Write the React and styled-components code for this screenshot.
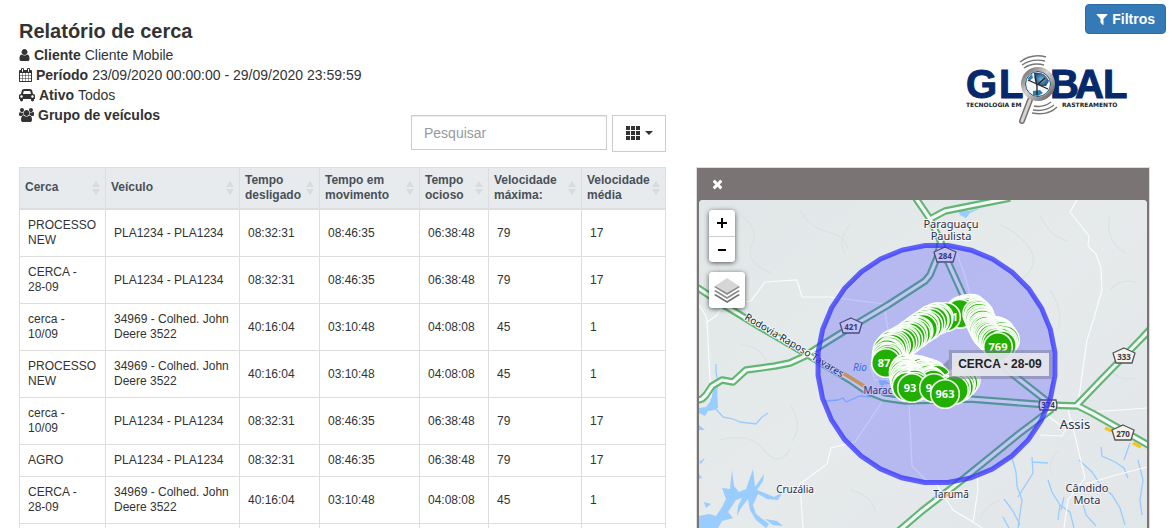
import { useState } from 'react';
import styled, { createGlobalStyle } from 'styled-components';

const GlobalStyle = createGlobalStyle`
    * {
        box-sizing: border-box;
    }

    body {
        margin: 0;
        background: #ffffff;
        color: #333333;
        font-family: 'Liberation Sans', Arial, sans-serif;
        font-size: 14px;
        line-height: 20px;
    }

    button, input {
        font-family: inherit;
    }
`;

const Page = styled.div`
    display: flex;
    flex-direction: column;
    gap: 15px;
    height: 100vh;
    overflow: hidden;
    padding: 0 23px 0 19px;
`;

const Columns = styled.div`
    display: grid;
    grid-template-columns: minmax(0, 647fr) minmax(0, 454fr);
    grid-template-rows: ${(props) => (props.$fill ? 'minmax(0, 1fr)' : 'auto')};
    gap: 30px;
    flex: ${(props) => (props.$fill ? '1' : 'none')};
    min-height: 0;
`;

const ReportHead = styled.header`
    display: flex;
    justify-content: space-between;
    align-items: flex-end;
    height: 152px;
`;

const ReportInfo = styled.div`
    align-self: flex-start;
    padding-top: 19px;
    white-space: nowrap;
`;

const Title = styled.h1`
    margin: 0 0 2px;
    font-size: 20px;
    line-height: 24px;
    font-weight: bold;
`;

const InfoLine = styled.p`
    display: flex;
    align-items: center;
    gap: 4px;
    margin: 0;
`;

const Icon = styled.svg`
    display: block;
    flex: none;
    fill: currentColor;
`;

const Toolbar = styled.div`
    display: flex;
    align-items: flex-start;
    gap: 5px;
    margin-left: -40px;
`;

const SearchInput = styled.input`
    width: 196px;
    height: 35px;
    padding: 6px 12px;
    border: 1px solid #cccccc;
    border-radius: 0;
    box-shadow: inset 0 1px 1px rgba(0, 0, 0, 0.08);
    font-size: 14px;
    color: #555555;
    outline: none;

    &::placeholder {
        color: #999999;
    }
`;

const ColumnsButton = styled.button`
    display: flex;
    align-items: center;
    justify-content: center;
    gap: 5px;
    width: 54px;
    height: 37px;
    padding: 0 0 2px;
    border: 1px solid #cccccc;
    background: #ffffff;
    color: #333333;
    cursor: pointer;
`;

const Brand = styled.div`
    display: flex;
    flex-direction: column;
    align-items: flex-end;
    gap: 19px;
    margin-right: -16px;
    padding-top: 4px;
`;

const FilterButton = styled.button`
    display: flex;
    align-items: center;
    gap: 4px;
    height: 30px;
    padding: 0 10px;
    border: 1px solid #2e6da4;
    border-radius: 4px;
    background: #337ab7;
    color: #ffffff;
    font-size: 14px;
    font-weight: bold;
    cursor: pointer;
`;

const Logo = styled.svg`
    display: block;
    width: 164px;
    height: 74px;
    margin-right: 37px;
`;

const Table = styled.table`
    width: 100%;
    table-layout: fixed;
    border-collapse: separate;
    border-spacing: 0;
    border: 1px solid #dddddd;
    border-width: 1px 0 0 1px;
    font-size: 12px;
    line-height: 15px;
`;

const HeadCell = styled.th`
    padding: 0 0 1px;
    border-right: 1px solid #dddddd;
    border-bottom: 2px solid #dddddd;
    background: #e7ebee;
`;

const SortButton = styled.button`
    display: flex;
    align-items: center;
    justify-content: space-between;
    width: 100%;
    height: 39px;
    padding: 0 5px;
    border: 0;
    background: transparent;
    color: #495057;
    font-size: 12px;
    font-weight: bold;
    line-height: 15px;
    text-align: left;
    cursor: pointer;
`;

const Cell = styled.td`
    height: 32px;
    padding: 8px;
    border-right: 1px solid #dddddd;
    border-bottom: 1px solid #dddddd;
    vertical-align: middle;
`;

const MapPanel = styled.section`
    display: flex;
    flex-direction: column;
    border: 1px solid #dddddd;
    border-bottom: 0;
    background: #7a7574;
    padding: 0 2px;
`;

const MapHeader = styled.div`
    display: flex;
    align-items: center;
    height: 32px;
    padding-left: 13px;
`;

const CloseButton = styled.button`
    padding: 0;
    border: 0;
    background: transparent;
    color: #ffffff;
    cursor: pointer;
`;

const MapArea = styled.div`
    position: relative;
    flex: 1;
    min-height: 0;
    overflow: hidden;
    border-radius: 4px 4px 0 0;
    background: #e2e8ea;
`;

const MapSvg = styled.svg`
    display: block;
    width: 100%;
    height: 100%;
    font-family: 'Noto Sans', sans-serif;
`;

const MapControls = styled.div`
    position: absolute;
    top: 10px;
    left: 10px;
    display: flex;
    flex-direction: column;
    align-items: flex-start;
    gap: 10px;
`;

const ControlBar = styled.div`
    overflow: hidden;
    border-radius: 4px;
    background: #ffffff;
    box-shadow: 0 1px 5px rgba(0, 0, 0, 0.65);
`;

const ControlButton = styled.button`
    display: flex;
    align-items: center;
    justify-content: center;
    width: ${(props) => props.$size}px;
    height: ${(props) => props.$size}px;
    padding: 0;
    border: 0;
    background: #ffffff;
    color: #000000;
    cursor: pointer;

    & + & {
        border-top: 1px solid #cccccc;
    }
`;

const USER =
    'M1536 1399q0 109-62.5 187t-150.5 78h-854q-88 0-150.5-78t-62.5-187q0-85 8.5-160.5t31.5-152 58.5-131 94-89 134.5-34.5q131 128 313 128t313-128q76 0 134.5 34.5t94 89 58.5 131 31.5 152 8.5 160.5zm-256-887q0 159-112.5 271.5t-271.5 112.5-271.5-112.5-112.5-271.5 112.5-271.5 271.5-112.5 271.5 112.5 112.5 271.5z';
const CALENDAR =
    'M192 1664h288v-288h-288v288zm352 0h320v-288h-320v288zm-352-352h288v-320h-288v320zm352 0h320v-320h-320v320zm-352-384h288v-288h-288v288zm736 736h320v-288h-320v288zm-384-736h320v-288h-320v288zm768 736h288v-288h-288v288zm-384-352h320v-320h-320v320zm-352-864v-288q0-13-9.5-22.5t-22.5-9.5h-64q-13 0-22.5 9.5t-9.5 22.5v288q0 13 9.5 22.5t22.5 9.5h64q13 0 22.5-9.5t9.5-22.5zm736 864h288v-320h-288v320zm-384-384h320v-288h-320v288zm384 0h288v-288h-288v288zm32-480v-288q0-13-9.5-22.5t-22.5-9.5h-64q-13 0-22.5 9.5t-9.5 22.5v288q0 13 9.5 22.5t22.5 9.5h64q13 0 22.5-9.5t9.5-22.5zm384-64v1280q0 52-38 90t-90 38h-1408q-52 0-90-38t-38-90v-1280q0-52 38-90t90-38h128v-96q0-66 47-113t113-47h64q66 0 113 47t47 113v96h384v-96q0-66 47-113t113-47h64q66 0 113 47t47 113v96h128q52 0 90 38t38 90z';
const CAR =
    'M480 1088q0-66-47-113t-113-47-113 47-47 113 47 113 113 47 113-47 47-113zm36-320h1016l-89-357q-2-8-14-17.5t-21-9.5h-768q-9 0-21 9.5t-14 17.5zm1372 320q0-66-47-113t-113-47-113 47-47 113 47 113 113 47 113-47 47-113zm160-96v384q0 14-9 23t-23 9h-96v128q0 80-56 136t-136 56-136-56-56-136v-128h-1024v128q0 80-56 136t-136 56-136-56-56-136v-128h-96q-14 0-23-9t-9-23v-384q0-93 65.5-158.5t158.5-65.5h28l105-419q23-94 104-157.5t179-63.5h768q98 0 179 63.5t104 157.5l105 419h28q93 0 158.5 65.5t65.5 158.5z';
const USERS =
    'M657 896q-162 5-265 128h-134q-82 0-138-40.5t-56-118.5q0-353 124-353 6 0 43.5 21t97.5 42.5 119 21.5q67 0 133-23-5 37-5 66 0 159 93 292zm1071 637q0 120-73 189.5t-194 69.5h-874q-121 0-194-69.5t-73-189.5q0-53 3.5-103.5t14-109 26.5-108.5 43-97.5 62-81 85.5-53.5 111.5-20q10 0 43 21.5t73 48 107 48 135 21.5 135-21.5 107-48 73-48 43-21.5q61 0 111.5 20t85.5 53.5 62 81 43 97.5 26.5 108.5 14 109 3.5 103.5zm-1024-1277q0 106-75 181t-181 75-181-75-75-181 75-181 181-75 181 75 75 181zm704 384q0 159-112.5 271.5t-271.5 112.5-271.5-112.5-112.5-271.5 112.5-271.5 271.5-112.5 271.5 112.5 112.5 271.5zm576 225q0 78-56 118.5t-138 40.5h-134q-103-123-265-128 93-133 93-292 0-29-5-66 66 23 133 23 59 0 119-21.5t97.5-42.5 43.5-21q124 0 124 353zm-128-609q0 106-75 181t-181 75-181-75-75-181 75-181 181-75 181 75 75 181z';
const FILTER =
    'M1403 295q17 41-14 70l-493 493v742q0 42-39 59-13 5-25 5-27 0-45-19l-256-256q-19-19-19-45v-486l-493-493q-31-29-14-70 17-39 59-39h1280q42 0 59 39z';
const TIMES =
    'M1490 1322q0 40-28 68l-136 136q-28 28-68 28t-68-28l-294-294-294 294q-28 28-68 28t-68-28l-136-136q-28-28-28-68t28-68l294-294-294-294q-28-28-28-68t28-68l136-136q28-28 68-28t68 28l294 294 294-294q28-28 68-28t68 28l136 136q28 28 28 68t-28 68l-294 294 294 294q28 28 28 68z';

const info = [
    { label: 'Cliente', value: 'Cliente Mobile', path: USER, box: '256 0 1280 1792', width: 11 },
    {
        label: 'Período',
        value: '23/09/2020 00:00:00 - 29/09/2020 23:59:59',
        path: CALENDAR,
        box: '64 0 1664 1792',
        width: 13,
    },
    { label: 'Ativo', value: 'Todos', path: CAR, box: '0 0 2048 1792', width: 16 },
    { label: 'Grupo de veículos', value: '', path: USERS, box: '64 0 1920 1792', width: 15 },
];

const columns = [
    { label: 'Cerca', width: 86 },
    { label: 'Veículo', width: 134 },
    { label: 'Tempo desligado', width: 80 },
    { label: 'Tempo em movimento', width: 100 },
    { label: 'Tempo ocioso', width: 69 },
    { label: 'Velocidade máxima:', width: 93 },
    { label: 'Velocidade média', width: 84 },
];

const pla = ['PLA1234 - PLA1234', '08:32:31', '08:46:35', '06:38:48', '79', '17'];
const deere = ['34969 - Colhed. John Deere 3522', '40:16:04', '03:10:48', '04:08:08', '45', '1'];

const rows = [
    ['PROCESSO NEW', ...pla],
    ['CERCA - 28-09', ...pla],
    ['cerca - 10/09', ...deere],
    ['PROCESSO NEW', ...deere],
    ['cerca - 10/09', ...pla],
    ['AGRO', ...pla],
    ['CERCA - 28-09', ...deere],
    ['', '', '', '', '', '', ''],
];

const highways = [
    'M695 286L727 307L760 327L803 352L850 380L866 391L884 398L905 401L970 399L1048 405L1078 406L1092 413L1150 446',
    'M695 401L702 399L706 395L712 386L722 380L733 382L746 370L775 366L790 363L805 356L822 345L851 327L888 305L925 281L930 275L937 258L941 240',
    'M915 197L930 219L940 240L948 262L963 295L985 340L1006 369L1048 402',
    'M1010 198L965 207L945 211L930 219',
    'M1076 406L1100 381L1142 338L1155 324',
    'M1052 409L1020 433L962 480L922 511L894 535',
];

const minorRoads = [
    'M699 305L706 316L707 322L711 398',
    'M707 322L716 316L725 304L751 301L765 282L797 280L802 297L830 297L884 304L888 330',
    'M1077 200L1070 212L1089 236L1088 246L1096 254L1101 268L1102 290L1094 318L1087 340L1078 404',
    'M882 402L855 442L831 448L827 464L800 484L803 528',
    'M909 402L912 466L926 480L930 484',
    'M1068 410L1076 440L1085 478L1068 500L1064 528',
    'M1088 412L1120 410L1147 408',
    'M1085 484L1120 474L1147 467',
    'M935 482L953 510L973 522L978 490L977 470M973 522L985 530',
    'M1040 410L1060 425L1072 420M1040 435L1062 436L1070 422',
    'M956 252L963 270L969 290L970 302',
    'M870 365L875 380L905 379',
];

const rivers = [
    'M716 364L716 372L718 383L714 407L723 417L733 419L740 422L756 424L762 417L768 413',
    'M826 401L838 400L843 398L846 402L860 396L870 397L881 388L885 380',
    'M1012 458L1016 472L1017 486L1022 500L1018 528M1032 457L1033 473L1018 497M1032 462L1048 463',
    'M1004 499L1013 511L1020 525M1003 517L1010 530',
    'M1079 460L1092 472L1100 484L1112 495L1120 508L1125 525',
    'M1048 480L1052 492L1060 505L1058 520M1060 505L1070 512L1074 528',
    'M1101 447L1102 456L1115 462L1124 468L1128 478M1130 443L1124 460M1138 460L1143 480L1140 500L1142 515',
    'M1082 500L1086 515L1096 526M1064 497L1061 510',
];

const lakes = [
    'M699 516L709 514L716 516L722 507L726 499L722 488L730 489L732 470L734 486L739 492L746 489L753 469L755 487L764 474L763 481L757 490L767 494L774 497L783 492L778 500L767 499L758 494L753 505L756 514L769 524L766 528L756 520L750 510L748 499L741 508L737 516L738 506L742 498L736 500L728 512L733 518L722 521L717 530L699 530Z',
    'M699 408L706 407L710 402L714 388L717 389L718 408L714 410L708 411L705 416L699 413Z',
    'M699 425L705 430L699 430ZM699 462L705 458L701 464ZM699 474L702 478L699 479Z',
    'M958 210L969 211L981 208L970 213L966 218L960 215ZM704 502L711 504L706 508Z',
    'M765 519L777 521L783 526L773 525Z',
    'M878 379L886 380L890 384L880 385Z',
];

const reliefs = [
    'M740 215q20 12 12 30t20 28M800 210q10 18 28 22t20 18M850 225q-14 16-4 30M1000 225q20 8 30 24t-8 30M1040 215q10 22 28 26M1110 215q-6 26 16 38M1110 290q10-12 26-8M1050 290q14 20 8 40',
    'M720 440q30-8 44 10t26 0M790 405q14 20 2 36M740 345q20 0 26 16M850 490q20 4 26 22M1000 500q-16 6-20 20M1110 370q10 12 26 8M1060 450q-14 10-8 24M725 240q-16 20-2 36',
];

const shields = [
    { text: '284', x: 945, y: 255 },
    { text: '421', x: 851, y: 326 },
    { text: '333', x: 1124, y: 356 },
    { text: '270', x: 1123, y: 433 },
];

const places = [
    { text: 'Paraguaçu', x: 951, y: 228, size: 11 },
    { text: 'Paulista', x: 951, y: 240, size: 11 },
    { text: 'Assis', x: 1075, y: 429, size: 13 },
    { text: 'Cruzália', x: 795, y: 493, size: 10 },
    { text: 'Tarumã', x: 951, y: 498, size: 10 },
    { text: 'Cândido', x: 1087, y: 492, size: 11 },
    { text: 'Mota', x: 1087, y: 504, size: 11 },
    { text: 'Marac', x: 878, y: 394, size: 10 },
];

const fence = Array.from({ length: 32 }, (_, i) => {
    const angle = (i / 32) * Math.PI * 2 + 0.1;
    return `${936.5 + Math.cos(angle) * 119},${364 + Math.sin(angle) * 119}`;
}).join(' ');

const trails = [
    [[887, 360], [889, 350], [893, 346], [905, 340], [920, 329], [932, 321], [940, 317]],
    [[959, 313], [972, 309], [978, 314], [982, 324], [987, 334], [997, 344]],
    [[992, 332], [999, 332], [1004, 339], [1000, 345]],
    [[904, 369], [910, 370], [918, 371], [932, 375], [938, 380]],
    [[904, 371], [906, 380], [907, 388]],
    [[905, 372], [914, 380], [914, 387]],
    [[922, 374], [930, 381], [934, 385]],
    [[965, 379], [958, 386], [950, 391]],
];

// spreads points along a trail, with a small sideways wobble
const buildTrail = (trail) => {
    const points = [];
    for (let i = 0; i < trail.length - 1; i++) {
        const [x1, y1] = trail[i];
        const [x2, y2] = trail[i + 1];
        const steps = Math.ceil(Math.hypot(x2 - x1, y2 - y1) / 1.3);
        for (let s = 0; s < steps; s++) {
            const t = s / steps;
            const wobble = Math.sin((i + 1) * 7 + s * 2.4) * 1.2;
            points.push({ x: x1 + (x2 - x1) * t + wobble, y: y1 + (y2 - y1) * t + wobble });
        }
    }
    return points;
};

// southern markers cover northern ones, the numbered stops stay readable
const markers = [
    ...trails.flatMap(buildTrail),
    { x: 946, y: 317, text: '1', dx: 9 },
    { x: 886, y: 363, text: '87', dx: -2 },
    { x: 998, y: 347, text: '769' },
    { x: 912, y: 388, text: '93', dx: -2 },
    { x: 934, y: 388, text: '9', dx: -5, z: 393 },
    { x: 945, y: 394, text: '963' },
].sort((a, b) => (a.z || a.y) - (b.z || b.y));

const SortIcon = () => (
    <Icon width="8" height="14" viewBox="0 0 8 14" color="#d9dbdd">
        <path d="M4 0L8 6H0zM4 14L0 8H8z" />
    </Icon>
);

const GlobalLogo = () => (
    <Logo viewBox="965 53 164 74" role="img" aria-label="Global Tecnologia em Rastreamento">
        <defs>
            <linearGradient id="rim" x1="0" y1="0" x2="1" y2="1">
                <stop offset="0" stopColor="#666666" />
                <stop offset="0.45" stopColor="#d8d4d0" />
                <stop offset="1" stopColor="#5a5654" />
            </linearGradient>
            <radialGradient id="globe" cx="0.5" cy="0.5" r="0.6">
                <stop offset="0" stopColor="#79b7da" />
                <stop offset="1" stopColor="#123c6a" />
            </radialGradient>
        </defs>
        <g
            fill="#05296b"
            stroke="#05296b"
            fontFamily="Liberation Sans, Arial, sans-serif"
            fontWeight="bold"
            fontSize="40"
        >
            <text x="966 999" y="98">GL</text>
            <text x="1050 1075 1103" y="98">BAL</text>
        </g>
        <g fill="#222222" fontFamily="DejaVu Sans, sans-serif" fontWeight="bold" fontSize="6">
            <text x="966" y="107">TECNOLOGIA EM</text>
            <text x="1062" y="107">RASTREAMENTO</text>
        </g>
        <g fill="none" stroke="#777777" strokeWidth="1.4">
            <path d="M1020 62q12-9 26-5M1022 65q10-7 23-4M1024 68q9-6 20-3" />
            <path d="M1057 107q-9 9-25 6M1054 105q-9 7-21 5M1051 102q-8 6-17 4" />
        </g>
        <path d="M1030 100L1022 121" stroke="#77716e" strokeWidth="6" strokeLinecap="round" />
        <path d="M1030 100L1022 121" stroke="#d8d4d2" strokeWidth="3" strokeLinecap="round" />
        <circle cx="1038" cy="84" r="15" fill="#f4f8fa" stroke="url(#rim)" strokeWidth="4" />
        <circle cx="1038" cy="84" r="12.5" fill="none" stroke="#264a6e" />
        <path d="M1034 73q11-2 15 8l-3 5-6 0-5-5z" fill="url(#globe)" />
        <path d="M1033 91l7-1 3 3-5 3-5-1zM1028 78l4-4 1 4-4 3z" fill="#317fad" />
        <path d="M1028 80L1048 89M1035 76L1037 86M1037 85L1045 78M1037 86v9" stroke="#222222" strokeWidth="1.3" />
    </Logo>
);

const FenceMap = () => (
    <MapSvg viewBox="699 200 448 328" preserveAspectRatio="xMidYMin slice">
        <defs>
            <linearGradient id="land" x1="0" y1="0" x2="1" y2="1">
                <stop offset="0" stopColor="#e1e7e8" />
                <stop offset="0.5" stopColor="#e6eaeb" />
                <stop offset="1" stopColor="#e1e6e9" />
            </linearGradient>
            <path id="raposo" d="M744 319L800 352L850 383" />
        </defs>
        <rect x="699" y="200" width="448" height="328" fill="url(#land)" />
        <g fill="none" stroke="#dde3e5" strokeWidth="1.5">
            {reliefs.map((d) => (
                <path key={d} d={d} />
            ))}
        </g>
        <g fill="none" stroke="#99ccff" strokeWidth="1.3">
            {rivers.map((d) => (
                <path key={d} d={d} />
            ))}
        </g>
        <g fill="#99ccff">
            {lakes.map((d) => (
                <path key={d} d={d} />
            ))}
        </g>
        <g fill="none" stroke="#ffffff" strokeWidth="1.2" strokeOpacity="0.85">
            {minorRoads.map((d) => (
                <path key={d} d={d} />
            ))}
        </g>
        <g fill="none" strokeLinejoin="round">
            {highways.map((d) => (
                <path key={d} d={d} stroke="#61b674" strokeWidth="7.5" />
            ))}
            {highways.map((d) => (
                <path key={d} d={d} stroke="#f4f8f6" strokeWidth="3.2" />
            ))}
            <path d="M841 372L864 386" stroke="#f7b51e" strokeWidth="3.5" />
            <path d="M1105 428L1112 431M1133 443L1141 447" stroke="#f7c51e" strokeWidth="3.5" />
        </g>
        {shields.map(({ text, x, y }) => (
            <g key={text} transform={`translate(${x} ${y})`}>
                <path d="M0-8L11-3L8 7H-8L-11-3Z" fill="#f5f3ea" stroke="#55535c" strokeWidth="1.3" />
                <text y="4" fontSize="8" fontWeight="bold" textAnchor="middle" fill="#3d3b48">
                    {text}
                </text>
            </g>
        ))}
        <g transform="translate(1048 405)">
            <path d="M-8-5H8L9 0L8 5H-8L-9 0Z" fill="#f5f3ea" stroke="#55535c" strokeWidth="1.3" />
            <text y="3" fontSize="8" fontWeight="bold" textAnchor="middle" fill="#3d3b48">
                374
            </text>
        </g>
        <g fill="#2e2e48" stroke="#f3f6f7" strokeWidth="2" paintOrder="stroke" textAnchor="middle">
            {places.map(({ text, x, y, size }) => (
                <text key={text} x={x} y={y} fontSize={size}>
                    {text}
                </text>
            ))}
        </g>
        <text x="853" y="371" fontSize="10" fontStyle="italic" fill="#3f7fd0">
            Rio
        </text>
        <text fontSize="10" fill="#222222" stroke="#f3f6f7" strokeWidth="2" paintOrder="stroke">
            <textPath href="#raposo">Rodovia Raposo Tavares</textPath>
        </text>
        <polygon points={fence} fill="#3333ff" fillOpacity="0.26" stroke="#3333ff" strokeOpacity="0.75" strokeWidth="5" />
        {markers.map(({ x, y, text, dx = 0 }, idx) => (
            <g key={idx} transform={`translate(${x} ${y})`}>
                <circle r="14.3" fill="#22b000" stroke="#ffffff" strokeOpacity="0.92" strokeWidth="1.6" />
                {text && (
                    <text x={dx} y="4" fontSize="11" fontWeight="bold" textAnchor="middle" fill="#ffffff">
                        {text}
                    </text>
                )}
            </g>
        ))}
        <path d="M949 359L943 365L949 371Z" fill="#777799" fillOpacity="0.6" />
        <path d="M949 350H1052V379H949ZM952 353V376H1049V353Z" fillRule="evenodd" fill="#777799" fillOpacity="0.5" />
        <rect x="952" y="353" width="97" height="23" fill="#e4e4ea" fillOpacity="0.95" />
        <text
            x="1000"
            y="368"
            fontSize="12"
            fontWeight="bold"
            fontFamily="Liberation Sans, Arial, sans-serif"
            textAnchor="middle"
            fill="#222222"
        >
            CERCA - 28-09
        </text>
    </MapSvg>
);

const App = () => {
    const [search, setSearch] = useState('');

    return (
        <>
            <GlobalStyle />
            <Page>
                <Columns>
                    <ReportHead>
                        <ReportInfo>
                            <Title>Relatório de cerca</Title>
                            {info.map(({ label, value, path, box, width }) => (
                                <InfoLine key={label}>
                                    <Icon width={width} height="14" viewBox={box}>
                                        <path d={path} />
                                    </Icon>
                                    <strong>{label}</strong>
                                    <span>{value}</span>
                                </InfoLine>
                            ))}
                        </ReportInfo>
                        <Toolbar>
                            <SearchInput
                                type="text"
                                aria-label="Pesquisar"
                                placeholder="Pesquisar"
                                value={search}
                                onChange={(e) => setSearch(e.target.value)}
                            />
                            <ColumnsButton type="button" aria-label="Colunas">
                                <Icon width="14" height="14" viewBox="0 0 14 14">
                                    <path d="M0 0h4v4H0zM5 0h4v4H5zM10 0h4v4h-4zM0 5h4v4H0zM5 5h4v4H5zM10 5h4v4h-4zM0 10h4v4H0zM5 10h4v4H5zM10 10h4v4h-4z" />
                                </Icon>
                                <Icon width="8" height="4" viewBox="0 0 8 4">
                                    <path d="M0 0h8L4 4z" />
                                </Icon>
                            </ColumnsButton>
                        </Toolbar>
                    </ReportHead>
                    <Brand>
                        <FilterButton type="button">
                            <Icon width="12" height="14" viewBox="0 0 1408 1792">
                                <path d={FILTER} />
                            </Icon>
                            Filtros
                        </FilterButton>
                        <GlobalLogo />
                    </Brand>
                </Columns>
                <Columns $fill>
                    <div>
                        <Table>
                            <colgroup>
                                {columns.map(({ label, width }) => (
                                    <col key={label} width={width} />
                                ))}
                            </colgroup>
                            <thead>
                                <tr>
                                    {columns.map(({ label }) => (
                                        <HeadCell key={label} scope="col">
                                            <SortButton type="button">
                                                {label}
                                                <SortIcon />
                                            </SortButton>
                                        </HeadCell>
                                    ))}
                                </tr>
                            </thead>
                            <tbody>
                                {rows.map((row, idx) => (
                                    <tr key={idx}>
                                        {row.map((value, col) => (
                                            <Cell key={col}>{value}</Cell>
                                        ))}
                                    </tr>
                                ))}
                            </tbody>
                        </Table>
                    </div>
                    <MapPanel>
                        <MapHeader>
                            <CloseButton type="button" aria-label="Fechar mapa">
                                <Icon width="11" height="14" viewBox="250 0 1292 1792">
                                    <path d={TIMES} />
                                </Icon>
                            </CloseButton>
                        </MapHeader>
                        <MapArea>
                            <FenceMap />
                            <MapControls>
                                <ControlBar>
                                    <ControlButton type="button" $size={26} aria-label="Aproximar">
                                        <Icon width="10" height="10" viewBox="0 0 10 10">
                                            <path d="M4 0h2v4h4v2H6v4H4V6H0V4h4z" />
                                        </Icon>
                                    </ControlButton>
                                    <ControlButton type="button" $size={26} aria-label="Afastar">
                                        <Icon width="10" height="10" viewBox="0 0 10 10">
                                            <path d="M1 4h8v2H1z" />
                                        </Icon>
                                    </ControlButton>
                                </ControlBar>
                                <ControlBar>
                                    <ControlButton type="button" $size={36} aria-label="Camadas">
                                        <svg width="26" height="26" viewBox="0 0 26 26">
                                            <path d="M13 11L26 18L13 26L0 18Z" fill="#747474" />
                                            <path d="M13 9L26 16L13 24L0 16Z" fill="#ffffff" />
                                            <path d="M13 7L26 14L13 22L0 14Z" fill="#8a8a8a" />
                                            <path d="M13 5L26 12L13 20L0 12Z" fill="#ffffff" />
                                            <path d="M13 2L26 10L13 18L0 10Z" fill="#8a8a8a" />
                                            <path d="M13 1L25 9L13 16L1 9Z" fill="#d6d6d6" />
                                        </svg>
                                    </ControlButton>
                                </ControlBar>
                            </MapControls>
                        </MapArea>
                    </MapPanel>
                </Columns>
            </Page>
        </>
    );
};

export default App;
